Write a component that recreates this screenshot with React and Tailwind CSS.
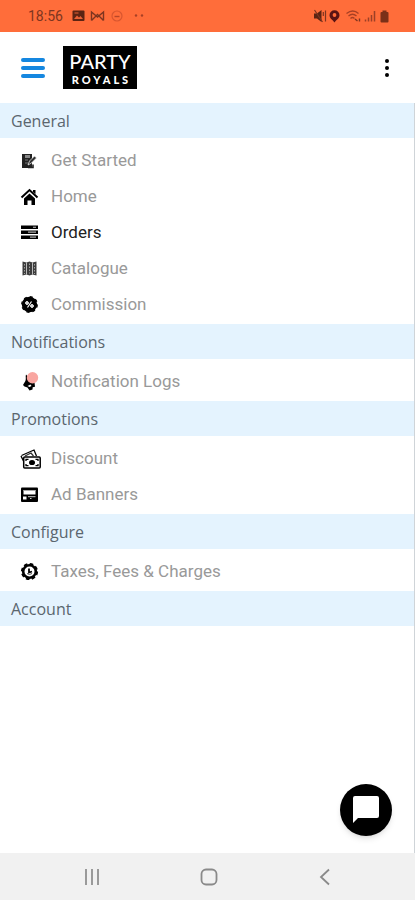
const sections = [
  {
    title: "General",
    items: [
      { label: "Get Started", icon: GetStartedIcon },
      { label: "Home", icon: HomeIcon },
      { label: "Orders", icon: OrdersIcon, active: true },
      { label: "Catalogue", icon: CatalogueIcon },
      { label: "Commission", icon: CommissionIcon },
    ],
  },
  {
    title: "Notifications",
    items: [{ label: "Notification Logs", icon: BellIcon }],
  },
  {
    title: "Promotions",
    items: [
      { label: "Discount", icon: DiscountIcon },
      { label: "Ad Banners", icon: BannerIcon },
    ],
  },
  {
    title: "Configure",
    items: [{ label: "Taxes, Fees & Charges", icon: TaxIcon }],
  },
  { title: "Account", items: [] },
];

function GetStartedIcon() {
  return (
    <svg width="22" height="20" viewBox="0 0 22 20">
      <path d="M2 3h10v14H2z" fill="#222" />
      <path d="M5 4h5v3H5z" fill="#888" />
      <path d="M5 9h3M5 12h3" stroke="#777" strokeWidth="1" />
      <path d="M8 14l1.500-4 5-5 2 2-5 5z" fill="#333" stroke="#fff" strokeWidth="0.700" />
      <path d="M8 16.500h5v-3" stroke="#222" strokeWidth="1.600" fill="none" />
    </svg>
  );
}

function HomeIcon() {
  return (
    <svg width="22" height="20" viewBox="0 0 22 20">
      <path d="M1.500 10.500L9.500 3l8 7.500" fill="none" stroke="#000" strokeWidth="2" />
      <path d="M13 3h2.500v4L13 5z" />
      <path d="M4 11.500L9.500 6.500 15 11.500V18h-3.500v-4.500h-4V18H4z" />
    </svg>
  );
}

function OrdersIcon() {
  return (
    <svg width="22" height="20" viewBox="0 0 22 20">
      <path d="M1 2.500h17V6H1zM1 7.500h17V11H1zM1 12.500h17V16H1z" />
      <path d="M13 4.300h3" stroke="#999" strokeWidth="1.300" />
      <path d="M8 9.200h8M10 14.200h6" stroke="#aaa" strokeWidth="1.200" />
    </svg>
  );
}

function CatalogueIcon() {
  return (
    <svg width="22" height="20" viewBox="0 0 22 20">
      <path d="M2.500 2.500l4 1 3-1 3 1 4-1v14l-4-1-3 1-3-1-4 1z" fill="#3c3c3c" />
      <path d="M6.500 3.500v12M12.500 3.500v12" stroke="#bbb" strokeWidth="1" />
      <path d="M4.500 5v10M9.500 4.500v10M14.500 5v10" stroke="#aaa" strokeWidth="0.900" strokeDasharray="1.500 1.500" />
    </svg>
  );
}

function CommissionIcon() {
  return (
    <svg width="22" height="20" viewBox="0 0 22 20">
      <circle cx="9.500" cy="9.500" r="7.700" />
      <circle cx="9.500" cy="9.500" r="7.700" fill="none" stroke="#000" strokeWidth="1.400" strokeDasharray="3 3.050" />
      <path d="M7.500 12.500l4-6" stroke="#fff" strokeWidth="1.200" />
      <circle cx="7" cy="8" r="1.400" fill="#bbb" stroke="#fff" strokeWidth="1" />
      <circle cx="12" cy="11" r="1.400" fill="#bbb" stroke="#fff" strokeWidth="1" />
    </svg>
  );
}

function BellIcon() {
  return (
    <svg width="22" height="20" viewBox="0 0 22 20">
      <path d="M6 2.500c-.8 2 .4 4-.6 6.500L3 13l1.500 1.500 3 1L9.500 18.500l3-1 .2-2.200 2.300-.6-.5-4.200L10 7z" />
      <path d="M7.500 14l3-1.500 1 1.500-2 1z" fill="#fff" />
      <circle cx="12.500" cy="5.800" r="5.700" fill="#f9a6a1" />
    </svg>
  );
}

function DiscountIcon() {
  return (
    <svg width="22" height="20" viewBox="0 0 22 20">
      <path d="M1.500 6.500L14 1l2.500 6" fill="#fff" stroke="#000" strokeWidth="1.300" />
      <path d="M5 7l6-3 2.500 3" fill="none" stroke="#333" strokeWidth="1.300" />
      <path d="M1 7l2.500 5" stroke="#000" strokeWidth="1.400" />
      <rect x="3.700" y="8" width="16.500" height="11" rx="1" fill="#fff" stroke="#000" strokeWidth="1.500" />
      <path d="M6 12v-1.700h2.500M15.500 10.300H18V12M6 15v1.700h2.500M15.500 16.700H18V15" fill="none" stroke="#000" strokeWidth="1.300" />
      <ellipse cx="12" cy="13.500" rx="3" ry="2.600" />
    </svg>
  );
}

function BannerIcon() {
  return (
    <svg width="22" height="20" viewBox="0 0 22 20">
      <rect x="1" y="2.500" width="17" height="14.500" rx="1" />
      <path d="M3.500 5h12v4.500h-12z" fill="#fff" />
      <path d="M3.500 5.500h12" stroke="#aaa" strokeWidth="1" />
      <path d="M3 11.500h3.500v3H3z" fill="#fff" />
      <path d="M8 11.700h7.500M10 13.500h1.500" stroke="#ccc" strokeWidth="1" />
    </svg>
  );
}

function TaxIcon() {
  return (
    <svg width="22" height="20" viewBox="0 0 22 20">
      <circle cx="9.500" cy="9.500" r="6.300" fill="none" stroke="#000" strokeWidth="2.600" />
      <circle cx="9.500" cy="9.500" r="7.700" fill="none" stroke="#000" strokeWidth="1.800" strokeDasharray="3.600 2.450" />
      <path d="M9 6.500v4l3-1" stroke="#000" strokeWidth="1.800" fill="none" />
      <path d="M7 11.500q2.500 2 5 0" stroke="#555" strokeWidth="1" fill="none" />
    </svg>
  );
}

function StatusBar() {
  return (
    <div className="flex h-8 items-center justify-between bg-[#ff6d3a] pr-6 pl-7 text-[#7d3520]">
      <div className="flex items-center gap-2">
        <span className="font-[Roboto] text-sm">18:56</span>
        <svg width="78" height="14" viewBox="0 0 78 14">
          <rect x="1.500" y="1.500" width="12" height="10.500" rx="1" fill="#5c2413" />
          <path d="M3 10l3-3.500 2 2L9.500 7l2.500 3z" fill="#e86135" />
          <path d="M3.500 4h4" stroke="#e86135" />
          <path d="M20.500 11.500V3L26.500 8 32.500 3v8.500M20.500 11.500l6-6 6 6" fill="none" stroke="currentColor" strokeWidth="1.400" />
          <circle cx="46" cy="7" r="5" fill="none" stroke="#d9562f" strokeWidth="1.200" />
          <path d="M43.500 7.500h5" stroke="#b84627" strokeWidth="1.400" />
          <circle cx="65" cy="6.500" r="1.200" fill="#a84024" />
          <circle cx="71" cy="6.500" r="1.200" fill="#a84024" />
        </svg>
      </div>
      <svg width="78" height="16" viewBox="0 0 78 16">
        <path d="M1 5.500h3L8.500 2v12L4 10.500H1z" fill="#5c2413" />
        <path d="M1.500 2l8 12M12.500 2.500v11M10.300 4v4" stroke="#7d3520" strokeWidth="1.200" />
        <path d="M21.500 2.300a5 5 0 0 1 5 5c0 3-3 4.500-5 7.200-2-2.700-5-4.200-5-7.200a5 5 0 0 1 5-5z" fill="#5a1414" />
        <circle cx="21.500" cy="7" r="1.900" fill="#ff6d3a" />
        <path d="M33.500 5.500q6.500-5 12 0M35.500 8q4-3.500 8 0M37.500 10.500q2-2 4 0" fill="none" stroke="#a84024" strokeWidth="1.300" />
        <path d="M42 11l2.500 2M46.500 10.500v3" stroke="#7d3520" strokeWidth="1.400" />
        <path d="M52.500 13.500v-2M55.500 13.500v-4M58.500 13.500V7M61.500 13.500V3" stroke="#9c4027" strokeWidth="1.500" />
        <rect x="67.500" y="4" width="8" height="10.500" rx="1" fill="#7a3018" />
        <rect x="69.500" y="2.500" width="4" height="2" fill="#7a3018" />
      </svg>
    </div>
  );
}

function Header() {
  return (
    <header className="flex h-[71px] items-center justify-between bg-white pr-[22px] pl-[21px]">
      <div className="flex items-center gap-[18px]">
        <button aria-label="Toggle menu" className="flex flex-col gap-1">
          <span className="h-1 w-6 rounded-xs bg-[#1587e0]" />
          <span className="h-1 w-6 rounded-xs bg-[#1587e0]" />
          <span className="h-1 w-6 rounded-xs bg-[#1587e0]" />
        </button>
        <div className="flex h-[43px] w-[74px] flex-col items-center justify-center bg-black font-[Lato] text-white">
          <span className="text-[20px] leading-6 font-medium">PARTY</span>
          <span className="pl-[3px] text-[11px] leading-[14px] font-black tracking-[3px]">ROYALS</span>
        </div>
      </div>
      <button aria-label="More options" className="flex w-3 flex-col items-center gap-[3px]">
        <span className="size-1 rounded-full bg-black" />
        <span className="size-1 rounded-full bg-black" />
        <span className="size-1 rounded-full bg-black" />
      </button>
    </header>
  );
}

function Section({ title, items }) {
  return (
    <section>
      <h2 className="flex h-[35px] items-center bg-[#e4f3fe] pl-[11px] font-['Open_Sans'] text-base text-[#5b666e]">
        {title}
      </h2>
      {items.length > 0 && (
        <ul className="pt-[5px] pb-px">
          {items.map(({ label, icon: Icon, active }) => (
            <li key={label}>
              <a
                href="#"
                className={`flex h-9 items-center gap-2 pl-5 font-[Roboto] text-[17px] ${
                  active ? "text-[#222222]" : "text-[#999999]"
                }`}
              >
                <span className="w-[23px]">
                  <Icon />
                </span>
                {label}
              </a>
            </li>
          ))}
        </ul>
      )}
    </section>
  );
}

export default function App() {
  return (
    <div className="relative flex min-h-screen flex-col bg-white">
      <StatusBar />
      <Header />

      <nav className="flex-1 border-r border-[#cfd4d8]">
        {sections.map((section) => (
          <Section key={section.title} title={section.title} items={section.items} />
        ))}
      </nav>

      {/* Floating chat button */}
      <button
        aria-label="Open chat"
        className="absolute right-[23px] bottom-16 flex size-[52px] items-center justify-center rounded-full bg-black shadow-md"
      >
        <svg width="28" height="28" viewBox="0 0 28 28">
          <path d="M3 0h22a2 2 0 0 1 2 2v18a2 2 0 0 1-2 2H6l-5 5V2a2 2 0 0 1 2-2z" fill="#fff" />
        </svg>
      </button>

      <footer className="flex h-[47px] items-center justify-between bg-[#f1f1f1] pr-[81px] pl-[83px]">
        <button aria-label="Recent apps">
          <svg width="18" height="18" viewBox="0 0 18 18">
            <path d="M3 1v16M9 1v16M15 1v16" stroke="#9a9a9a" strokeWidth="2" />
          </svg>
        </button>
        <button aria-label="Home screen">
          <svg width="18" height="18" viewBox="0 0 18 18">
            <rect x="1.500" y="1.500" width="15" height="15" rx="4.500" fill="none" stroke="#8a8a8a" strokeWidth="1.800" />
          </svg>
        </button>
        <button aria-label="Back">
          <svg width="18" height="18" viewBox="0 0 18 18">
            <path d="M13 1.500L5 9l8 7.500" fill="none" stroke="#8a8a8a" strokeWidth="1.800" />
          </svg>
        </button>
      </footer>
    </div>
  );
}
